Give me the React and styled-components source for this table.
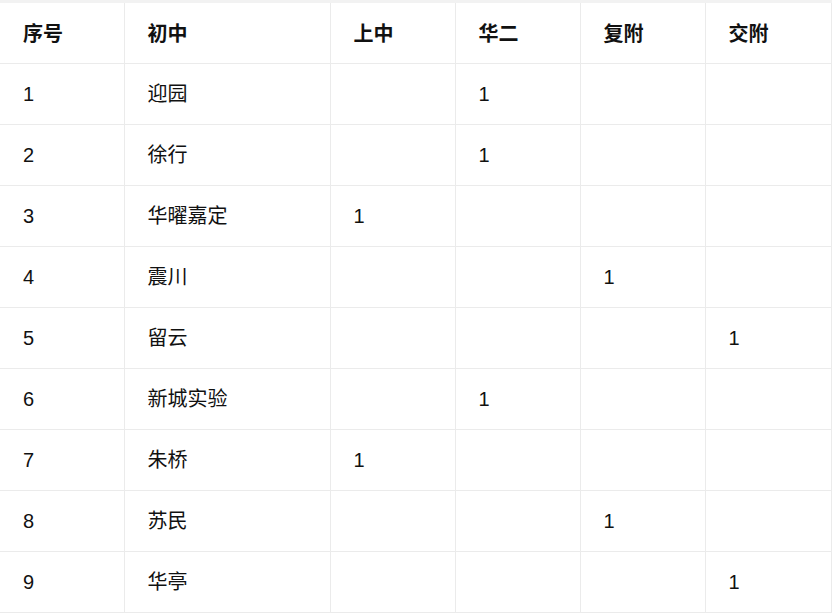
import React from 'react'
import styled, { createGlobalStyle } from 'styled-components'

const GlobalStyle = createGlobalStyle`
  body {
    margin: 0;
    background: #ffffff;
    font-family: "Liberation Sans", "Noto Sans CJK SC", sans-serif;
    color: #111111;
  }
`

const columns = [
  { key: 'no', title: '序号', width: 124 },
  { key: 'school', title: '初中', width: 206 },
  { key: 'sz', title: '上中', width: 125 },
  { key: 'he', title: '华二', width: 125 },
  { key: 'ff', title: '复附', width: 125 },
  { key: 'jf', title: '交附', width: 126 },
]

const rows = [
  { no: 1, school: '迎园', he: 1 },
  { no: 2, school: '徐行', he: 1 },
  { no: 3, school: '华曜嘉定', sz: 1 },
  { no: 4, school: '震川', ff: 1 },
  { no: 5, school: '留云', jf: 1 },
  { no: 6, school: '新城实验', he: 1 },
  { no: 7, school: '朱桥', sz: 1 },
  { no: 8, school: '苏民', ff: 1 },
  { no: 9, school: '华亭', jf: 1 },
]

function App() {
  return (
    <>
      <GlobalStyle />
      <Page>
        <TopBar />
        <Table>
          <colgroup>
            {columns.map((col) => (
              <col key={col.key} style={{ width: col.width }} />
            ))}
          </colgroup>
          <thead>
            <tr>
              {columns.map((col) => (
                <HeadCell key={col.key}>{col.title}</HeadCell>
              ))}
            </tr>
          </thead>
          <tbody>
            {rows.map((row) => (
              <tr key={row.no}>
                {columns.map((col) => (
                  <Cell key={col.key}>{row[col.key] ?? ''}</Cell>
                ))}
              </tr>
            ))}
          </tbody>
        </Table>
      </Page>
    </>
  )
}

const Page = styled.div`
  width: 832px;
  height: 616px;
  overflow: hidden;
`

const TopBar = styled.div`
  height: 3px;
  background: #f2f2f2;
`

const Table = styled.table`
  width: 831px;
  table-layout: fixed;
  border-collapse: collapse;
`

const Cell = styled.td`
  height: 60px;
  padding: 0 0 0 23px;
  border-right: 1px solid #ebebeb;
  border-bottom: 1px solid #ebebeb;
  font-size: 20px;
  line-height: 20px;
  vertical-align: middle;
  text-align: left;
  font-family: "Liberation Sans", "Noto Sans CJK SC", sans-serif;
  white-space: nowrap;
`

const HeadCell = styled(Cell).attrs({ as: 'th' })`
  font-weight: 700;
  font-family: "Noto Sans CJK SC", sans-serif;
`

export default App
